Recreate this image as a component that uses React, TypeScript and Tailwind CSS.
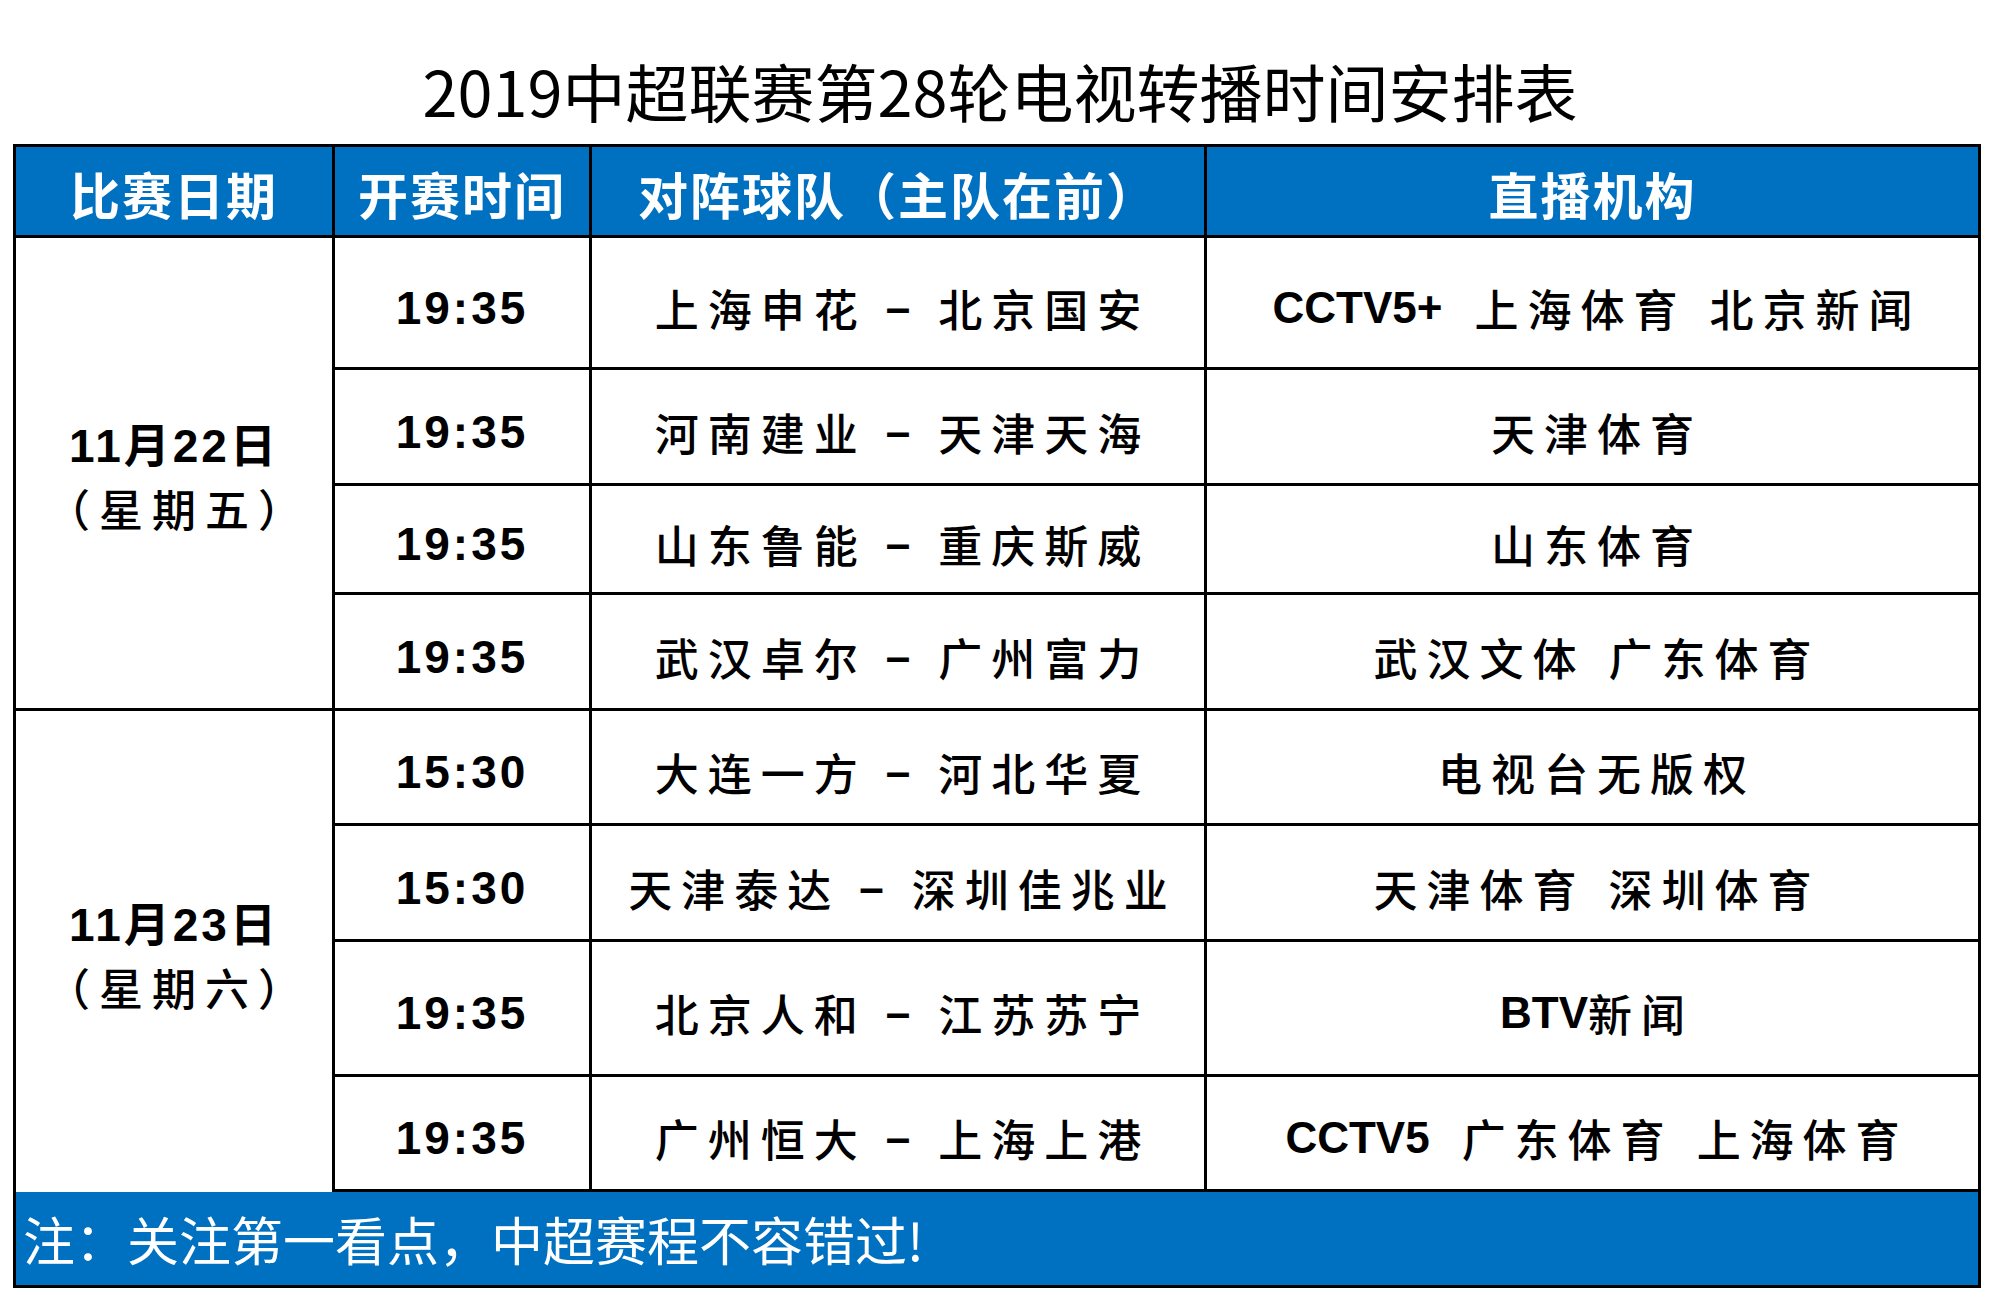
import React from "react";

type Seg = { k: "l" | "c"; s: string };
type Row = { t: string; home: string; away: string; tv: Seg[][] };

const rows: Row[] = [
  { t: "19:35", home: "上海申花", away: "北京国安", tv: [[{ k: "l", s: "CCTV5+" }], [{ k: "c", s: "上海体育" }], [{ k: "c", s: "北京新闻" }]] },
  { t: "19:35", home: "河南建业", away: "天津天海", tv: [[{ k: "c", s: "天津体育" }]] },
  { t: "19:35", home: "山东鲁能", away: "重庆斯威", tv: [[{ k: "c", s: "山东体育" }]] },
  { t: "19:35", home: "武汉卓尔", away: "广州富力", tv: [[{ k: "c", s: "武汉文体" }], [{ k: "c", s: "广东体育" }]] },
  { t: "15:30", home: "大连一方", away: "河北华夏", tv: [[{ k: "c", s: "电视台无版权" }]] },
  { t: "15:30", home: "天津泰达", away: "深圳佳兆业", tv: [[{ k: "c", s: "天津体育" }], [{ k: "c", s: "深圳体育" }]] },
  { t: "19:35", home: "北京人和", away: "江苏苏宁", tv: [[{ k: "l", s: "BTV" }, { k: "c", s: "新闻" }]] },
  { t: "19:35", home: "广州恒大", away: "上海上港", tv: [[{ k: "l", s: "CCTV5" }], [{ k: "c", s: "广东体育" }], [{ k: "c", s: "上海体育" }]] },
];

const cell = "border-r-[3px] border-b-[3px] border-black flex items-center justify-center";
const head = cell + " bg-[#0070c0] text-white font-['Noto_Sans_CJK_SC',sans-serif] font-bold text-[50px] leading-[60px] tracking-[2px] pt-[3px]";
const cjk = "font-['Noto_Sans_CJK_SC',sans-serif] font-medium text-[44px] leading-[56px] tracking-[9px] -mr-[9px]";
const latin = "font-['Liberation_Sans',sans-serif] font-bold text-[44px] leading-[56px]";

function DateCell({ d, w, last }: { d: string; w: string; last?: boolean }) {
  return (
    <div
      className={
        "row-span-4 border-r-[3px] border-black flex flex-col items-center justify-center pt-[8px] bg-white " +
        (last ? "border-b-0" : "border-b-[3px]")
      }
    >
      <div className="font-['Liberation_Sans','Noto_Sans_CJK_SC',sans-serif] font-bold text-[46px] leading-[62px] tracking-[3px] text-black">
        {d}
      </div>
      <div className="font-['Noto_Sans_CJK_SC',sans-serif] font-medium text-[44px] leading-[62px] tracking-[9px] -mr-[9px] text-black">
        {w}
      </div>
    </div>
  );
}

function DataRow({ r }: { r: Row }) {
  return (
    <>
      <div className={cell + " pt-[10px]"}>
        <span className="font-['Liberation_Sans',sans-serif] font-bold text-[46px] leading-[56px] tracking-[3px] text-black">
          {r.t}
        </span>
      </div>
      <div className={cell + " pt-[10px] gap-[28px] text-black"}>
        <span className={cjk}>{r.home}</span>{" "}
        <span className="font-['Liberation_Sans',sans-serif] font-bold text-[44px] leading-[56px]">–</span>{" "}
        <span className={cjk}>{r.away}</span>
      </div>
      <div className={cell + " pt-[10px] gap-[32px] text-black"}>
        {r.tv.map((g, i) => (
          <React.Fragment key={i}>
            {i > 0 ? " " : null}
            <span className="flex items-center">
              {g.map((s, j) => (
                <span key={j} className={s.k === "l" ? latin : cjk}>
                  {s.s}
                </span>
              ))}
            </span>
          </React.Fragment>
        ))}
      </div>
    </>
  );
}

export default function App() {
  return (
    <div className="w-[2000px] h-[1299px] bg-white overflow-hidden">
      <div className="h-[144px] pt-[36px] flex items-center justify-center">
        <h1 className="font-['Noto_Sans_CJK_SC',sans-serif] font-normal text-[63px] leading-[72px] text-black">
          2019中超联赛第28轮电视转播时间安排表
        </h1>
      </div>
      <div className="ml-[13px] w-[1968px] border-l-[3px] border-t-[3px] border-black grid grid-cols-[319px_257px_615px_774px] grid-rows-[91px_132px_116px_109px_116px_115px_116px_135px_115px_96px]">
        <div className={head}>比赛日期</div>
        <div className={head}>开赛时间</div>
        <div className={head + " tracking-[0px]"}>对阵球队（主队在前）</div>
        <div className={head}>直播机构</div>

        <DateCell d="11月22日" w="（星期五）" />
        <DataRow r={rows[0]} />
        <DataRow r={rows[1]} />
        <DataRow r={rows[2]} />
        <DataRow r={rows[3]} />

        <DateCell d="11月23日" w="（星期六）" last />
        <DataRow r={rows[4]} />
        <DataRow r={rows[5]} />
        <DataRow r={rows[6]} />
        <DataRow r={rows[7]} />

        <div className="col-span-4 bg-[#0070c0] border-r-[3px] border-b-[3px] border-black flex items-center pl-[7px]">
          <span className="font-['Noto_Sans_CJK_SC',sans-serif] font-normal text-[52px] leading-[64px] text-white">
            注：关注第一看点，中超赛程不容错过!
          </span>
        </div>
      </div>
    </div>
  );
}
